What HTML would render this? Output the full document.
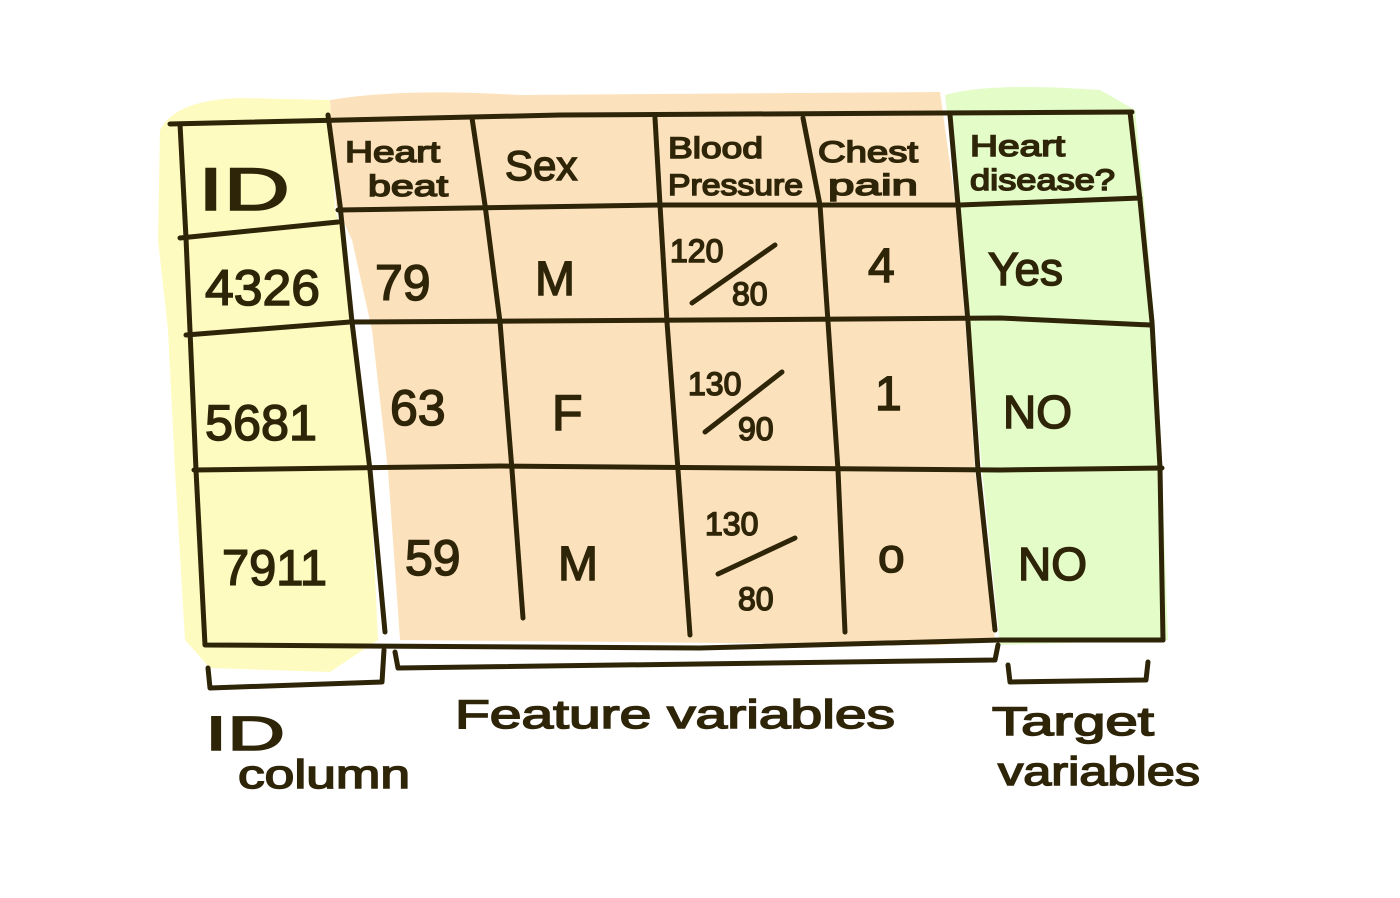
<!DOCTYPE html>
<html><head><style>
html,body{margin:0;padding:0;background:#fff;}
svg{display:block;}
text{font-family:"Liberation Sans",sans-serif;fill:#2e2408;stroke:#2e2408;stroke-width:1.5;}
</style></head><body>
<svg width="1400" height="898" viewBox="0 0 1400 898" xmlns="http://www.w3.org/2000/svg">
<g>
<path d="M160,130 Q175,100 240,98 L330,100 L335,210 L345,240 L355,330 L370,470 L378,640 L330,672 L210,668 L185,640 L175,470 L168,330 L158,240 Z" fill="#fdfbc0"/>
<path d="M330,100 Q400,88 520,95 L940,92 L955,200 L965,320 L975,470 L995,640 L940,645 L400,640 L388,470 L372,330 L352,240 L336,205 Z" fill="#fce2bc"/>
<path d="M945,95 Q990,82 1100,90 L1135,110 L1145,210 L1155,330 L1162,470 L1168,640 L1000,645 L982,470 L970,330 L958,205 Z" fill="#e4fcc8"/>
</g>
<g stroke="#2e2408" stroke-width="5" fill="none" stroke-linecap="round" stroke-linejoin="round">
<path d="M170,124 L560,115 L1132,112"/>
<path d="M180,124 L186,238 L196,470 L205,645 L700,648 L1000,640 L1163,640"/>
<path d="M1130,112 L1140,200 L1152,322 L1160,468 L1163,640"/>
<path d="M328,115 L340,205 L352,322 L370,470 L385,632"/>
<path d="M472,118 L485,205 L500,322 L512,470 L523,618"/>
<path d="M655,118 L660,205 L667,322 L678,470 L690,635"/>
<path d="M803,118 L820,205 L828,322 L838,470 L845,632"/>
<path d="M950,115 L958,205 L968,322 L978,470 L995,630"/>
<path d="M180,238 L338,222"/>
<path d="M338,210 L660,205 L960,205 L1140,198"/>
<path d="M186,335 L350,322 L700,320 L1000,318 L1150,325"/>
<path d="M194,470 L500,466 L1000,470 L1162,468"/>
<path d="M692,303 L775,245"/>
<path d="M705,432 L782,372"/>
<path d="M718,574 L795,538"/>
<path d="M208,668 L210,688 L382,682 L384,650"/>
<path d="M395,652 L398,668 L995,660 L998,645"/>
<path d="M1008,665 L1010,682 L1146,680 L1148,662"/>
</g>
<g font-size="54">
<text x="198" y="210" font-size="60" textLength="92" lengthAdjust="spacingAndGlyphs">ID</text>
<text x="205" y="305" font-size="50" textLength="115" lengthAdjust="spacingAndGlyphs">4326</text>
<text x="205" y="440" font-size="50" textLength="112" lengthAdjust="spacingAndGlyphs">5681</text>
<text x="222" y="585" font-size="50" textLength="105" lengthAdjust="spacingAndGlyphs">7911</text>
<text x="375" y="300" font-size="50">79</text>
<text x="390" y="425" font-size="50">63</text>
<text x="405" y="575" font-size="50">59</text>
<text x="535" y="295" font-size="48">M</text>
<text x="552" y="430" font-size="50">F</text>
<text x="558" y="580" font-size="48">M</text>
<text x="868" y="282" font-size="48">4</text>
<text x="875" y="410" font-size="48">1</text>
<text x="878" y="572" font-size="48">o</text>
<text x="988" y="285" font-size="46">Yes</text>
<text x="1003" y="428" font-size="46">NO</text>
<text x="1018" y="580" font-size="46">NO</text>
</g>
<g font-size="32">
<text x="670" y="262">120</text><text x="732" y="305">80</text>
<text x="688" y="395">130</text><text x="738" y="440">90</text>
<text x="705" y="535">130</text><text x="738" y="610">80</text>
</g>
<g font-size="30">
<text x="345" y="162" textLength="95" lengthAdjust="spacingAndGlyphs">Heart</text><text x="368" y="196" textLength="80" lengthAdjust="spacingAndGlyphs">beat</text>
<text x="505" y="180" font-size="42">Sex</text>
<text x="668" y="158" textLength="95" lengthAdjust="spacingAndGlyphs">Blood</text><text x="668" y="195" textLength="135" lengthAdjust="spacingAndGlyphs">Pressure</text>
<text x="818" y="162" textLength="100" lengthAdjust="spacingAndGlyphs">Chest</text><text x="828" y="195" textLength="90" lengthAdjust="spacingAndGlyphs">pain</text>
<text x="970" y="156" textLength="95" lengthAdjust="spacingAndGlyphs">Heart</text><text x="970" y="190" textLength="145" lengthAdjust="spacingAndGlyphs">disease?</text>
</g>
<g font-size="40">
<text x="205" y="750" font-size="48" textLength="80" lengthAdjust="spacingAndGlyphs">ID</text>
<text x="238" y="788" textLength="172" lengthAdjust="spacingAndGlyphs">column</text>
<text x="455" y="728" textLength="440" lengthAdjust="spacingAndGlyphs">Feature variables</text>
<text x="992" y="735" textLength="162" lengthAdjust="spacingAndGlyphs">Target</text>
<text x="998" y="785" textLength="202" lengthAdjust="spacingAndGlyphs">variables</text>
</g>
</svg>
</body></html>
